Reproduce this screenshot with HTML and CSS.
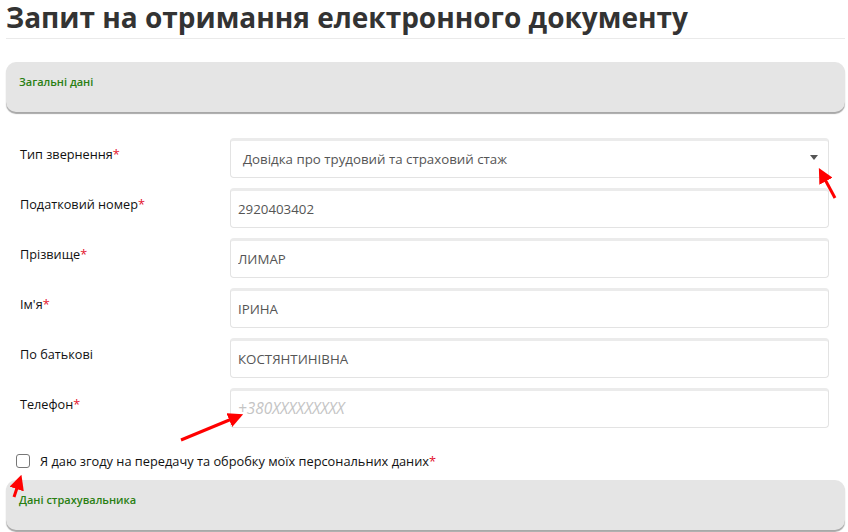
FILE: index.html
```html
<!DOCTYPE html>
<html lang="uk">
<head>
  <meta charset="UTF-8">
  <title>Запит на отримання електронного документу</title>
  <link rel="stylesheet" href="styles.css">
</head>
<body>
  <div class="page">
    <h1>Запит на отримання електронного документу</h1>

    <div class="panel">Загальні дані</div>

    <div class="form">
      <label>Тип звернення<span class="req">*</span></label>
      <div class="select">
        <span>Довідка про трудовий та страховий стаж</span>
        <span class="caret"></span>
      </div>

      <label>Податковий номер<span class="req">*</span></label>
      <input type="text" value="2920403402">

      <label>Прізвище<span class="req">*</span></label>
      <input type="text" value="ЛИМАР">

      <label>Ім'я<span class="req">*</span></label>
      <input type="text" value="ІРИНА">

      <label>По батькові</label>
      <input type="text" value="КОСТЯНТИНІВНА">

      <label>Телефон<span class="req">*</span></label>
      <input type="text" class="phone" placeholder="+380XXXXXXXXX">
    </div>

    <div class="agree">
      <span class="check"></span>
      <span>Я даю згоду на передачу та обробку моїх персональних даних<span class="req">*</span></span>
    </div>

    <div class="panel">Дані страхувальника</div>

    <!-- червоні стрілки-позначки -->
    <svg class="marks" width="848" height="532" viewBox="0 0 848 532">
      <defs>
        <marker id="head" markerWidth="5" markerHeight="5" refX="3.5" refY="2.5" orient="auto">
          <path d="M0,0 L5,2.5 L0,5 z" fill="#f00"/>
        </marker>
      </defs>
      <line x1="835" y1="198" x2="821" y2="172" stroke="#f00" stroke-width="3" marker-end="url(#head)"/>
      <line x1="181" y1="440" x2="239" y2="416" stroke="#f00" stroke-width="3" marker-end="url(#head)"/>
      <line x1="14" y1="497" x2="20" y2="479" stroke="#f00" stroke-width="3" marker-end="url(#head)"/>
    </svg>
  </div>
</body>
</html>
```

FILE: styles.css
```css
body {
  margin: 0;
  background: #fff;
  font-family: "Open Sans", Arial, sans-serif;
  color: #222;
}

.page {
  position: relative;
  width: 848px;
  height: 532px;
  overflow: hidden;
  padding: 0 3px 0 6px;
  box-sizing: border-box;
}

h1 {
  margin: 0;
  padding: 1px 0 4px;
  font-size: 28px;
  line-height: 33px;
  font-weight: 700;
  color: #333;
  border-bottom: 1px solid #eaeaea;
}

.panel {
  margin-top: 23px;
  height: 50px;
  box-sizing: border-box;
  padding: 12px 13px 0;
  background: #e5e5e5;
  border-radius: 10px;
  box-shadow: 0 2px 1px #a8a8a8;
  color: #2a7f12;
  font-size: 11px;
  line-height: 16px;
  font-weight: 600;
}

.form {
  display: grid;
  grid-template-columns: 210px 599px;
  row-gap: 10px;
  margin: 26px 0 0 14px;
}

label {
  padding-top: 7px;
  font-size: 12.7px;
  color: #111;
}

.req {
  color: #e3122c;
}

input, .select {
  box-sizing: border-box;
  height: 40px;
  width: 100%;
  padding: 0 7px;
  border: 1px solid #e3e3e3;
  border-top: 3px solid #ebebeb;
  border-radius: 4px;
  font-family: "Open Sans", Arial, sans-serif;
  font-size: 13.3px;
  color: #555;
  background: #fff;
  outline: none;
}

.select {
  display: flex;
  align-items: center;
  justify-content: space-between;
  padding: 0 10px 0 12px;
}

.caret {
  width: 0;
  height: 0;
  border-left: 4px solid transparent;
  border-right: 4px solid transparent;
  border-top: 5px solid #555;
  margin-top: -3px;
}

.phone::placeholder {
  color: #c4c4c4;
  font-style: italic;
  font-size: 15.4px;
}

.agree {
  display: flex;
  align-items: center;
  gap: 10px;
  margin: 24px 0 0 10px;
  font-size: 12.8px;
  color: #111;
}

.check {
  width: 12px;
  height: 12px;
  border: 1px solid #777;
  border-radius: 3px;
}

.agree + .panel {
  margin-top: 10px;
}

.marks {
  position: absolute;
  left: 0;
  top: 0;
  pointer-events: none;
}
```
